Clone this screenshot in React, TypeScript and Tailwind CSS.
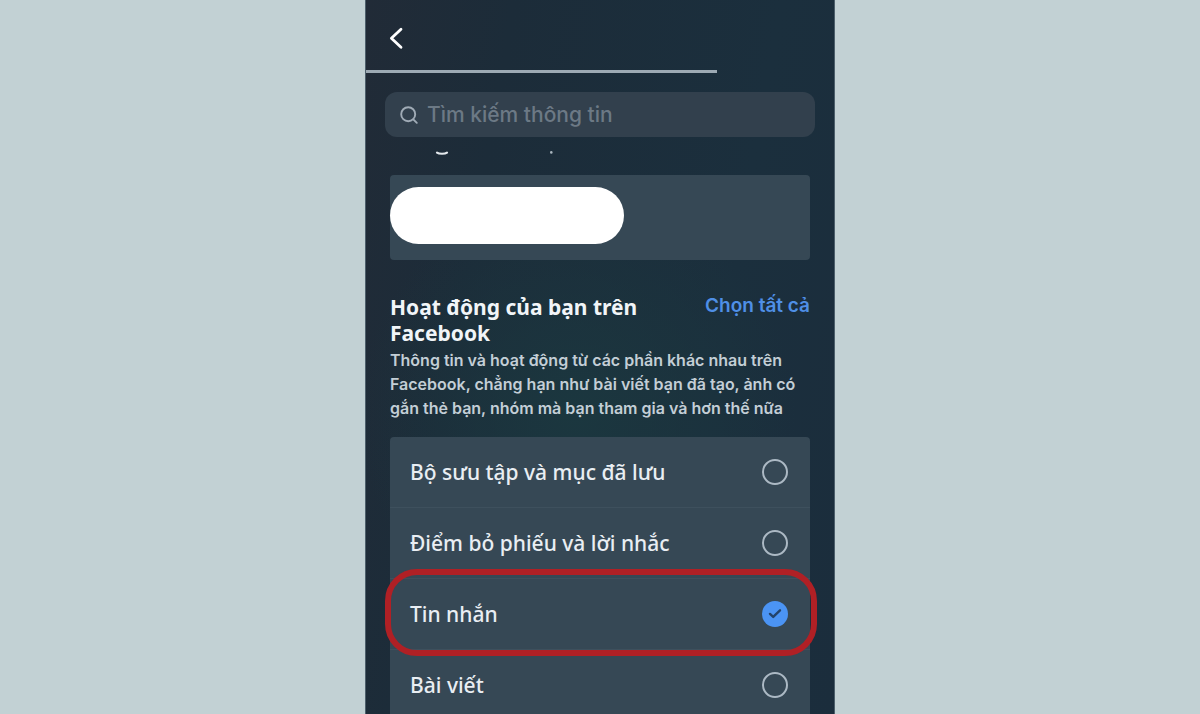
import { useState } from "react";

type Category = { id: string; label: string; highlighted?: boolean };

const categories: Category[] = [
  { id: "saved", label: "Bộ sưu tập và mục đã lưu" },
  { id: "polls", label: "Điểm bỏ phiếu và lời nhắc" },
  { id: "messages", label: "Tin nhắn", highlighted: true },
  { id: "posts", label: "Bài viết" },
];

function BackIcon() {
  return (
    <svg viewBox="0 0 16 24" className="h-6 w-4" fill="none" stroke="currentColor" strokeWidth="2.8" strokeLinecap="round" strokeLinejoin="round" aria-hidden="true">
      <path d="M13 3.200 3.400 12.300 13 21.200" />
    </svg>
  );
}

function SearchIcon() {
  return (
    <svg viewBox="0 0 20 20" className="h-5 w-5 shrink-0" fill="none" stroke="currentColor" strokeWidth="1.9" strokeLinecap="round" aria-hidden="true">
      <circle cx="9.2" cy="9.200" r="7" />
      <path d="m14.300 14.300 3.500 3.500" />
    </svg>
  );
}

function CategoryRow({ category, checked, onToggle }: { category: Category; checked: boolean; onToggle: () => void }) {
  return (
    <li className="relative border-b border-[#3e505d]">
      <label htmlFor={category.id} className="flex h-[70px] items-center justify-between pr-[22px] pl-5">
        <span className="text-[21px] leading-7 font-medium text-[#e9eef3]">{category.label}</span>
        <span className="grid h-[26px] w-[26px] place-items-center">
          <input
            id={category.id}
            type="checkbox"
            checked={checked}
            onChange={onToggle}
            className="col-start-1 row-start-1 h-[26px] w-[26px] appearance-none rounded-full border-2 border-[#acb9c4] checked:border-0 checked:bg-[#4b94f4]"
          />
          {checked && (
            <svg viewBox="0 0 26 26" className="pointer-events-none col-start-1 row-start-1 h-[26px] w-[26px]" fill="none" stroke="#23436b" strokeWidth="2.400" strokeLinecap="round" strokeLinejoin="round" aria-hidden="true">
              <path d="m8 12.900 3.200 3 6.800-6.600" />
            </svg>
          )}
        </span>
      </label>
      {category.highlighted && (
        <div className="pointer-events-none absolute -top-2.5 -right-[7px] -bottom-[7px] -left-[5px] rounded-[32px] border-[6px] border-[#b02025]" />
      )}
    </li>
  );
}

export default function App() {
  const [selected, setSelected] = useState<string[]>(["messages"]);

  const toggle = (id: string) =>
    setSelected((current) => (current.includes(id) ? current.filter((item) => item !== id) : [...current, id]));

  return (
    <div className="h-screen overflow-hidden bg-[#c2d1d4] font-['Inter',sans-serif]">
      <main className="mx-auto flex h-full max-w-[470px] flex-col border-x border-[#4d5f6b] bg-[#1c2d3a] bg-[radial-gradient(circle_at_45%_58%,#1b373f_0%,transparent_45%),linear-gradient(100deg,#212b37_0%,#1c2c39_25%,#1b2f3d_70%,#1b2d3c_100%)]">
        <header>
          <div className="flex h-[70px] items-center px-[22px] pt-1.5">
            <button type="button" aria-label="Quay lại" className="text-white">
              <BackIcon />
            </button>
          </div>
          <div className="h-[3px] w-3/4 bg-[#9daab4]" />
          <div className="px-[19px] pt-[19px]">
            <label className="flex h-[45px] items-center gap-2 rounded-xl bg-[#32404d] px-3.5 text-[#a0abb6]">
              <SearchIcon />
              <input
                type="search"
                aria-label="Tìm kiếm thông tin"
                placeholder="Tìm kiếm thông tin"
                className="min-w-0 flex-1 bg-transparent text-[21px] leading-7 font-medium text-white outline-none placeholder:text-[#6c7985]"
              />
            </label>
          </div>
        </header>

        <div className="min-h-0 flex-1 overflow-hidden px-6 pt-[14px]">
          <svg viewBox="0 0 420 6" className="h-1.5 w-full" fill="none" aria-hidden="true">
            <path d="M47 1.600c2 1.500 8 1.500 10 0" stroke="#e4e9ed" strokeWidth="2.200" strokeLinecap="round" />
            <circle cx="161.300" cy="1.400" r="1.300" fill="#a9b5be" />
          </svg>

          <section className="mt-[18px] rounded-sm bg-[#364855] pt-3 pb-4">
            <div className="h-[57px] w-[234px] rounded-full bg-white" />
          </section>

          <section className="mt-[34px]">
            <div className="flex items-start justify-between gap-4">
              <h2 className="max-w-[260px] font-['Noto_Sans',sans-serif] text-[21px] leading-[26px] font-bold text-[#f1f5f8]">
                Hoạt động của bạn trên Facebook
              </h2>
              <button type="button" onClick={() => setSelected(categories.map((c) => c.id))} className="text-[19px] leading-6 font-semibold whitespace-nowrap text-[#4f8fe6]">
                Chọn tất cả
              </button>
            </div>
            <p className="mt-0.5 text-[16px] leading-6 font-semibold text-[#c3ced6]">
              Thông tin và hoạt động từ các phần khác nhau trên Facebook, chẳng hạn như bài viết bạn đã tạo, ảnh có gắn thẻ bạn, nhóm mà bạn tham gia và hơn thế nữa
            </p>
            <ul className="mt-[17px] rounded-t-sm bg-[#364855] font-['Noto_Sans',sans-serif]">
              {categories.map((category) => (
                <CategoryRow key={category.id} category={category} checked={selected.includes(category.id)} onToggle={() => toggle(category.id)} />
              ))}
            </ul>
          </section>
        </div>
      </main>
    </div>
  );
}
